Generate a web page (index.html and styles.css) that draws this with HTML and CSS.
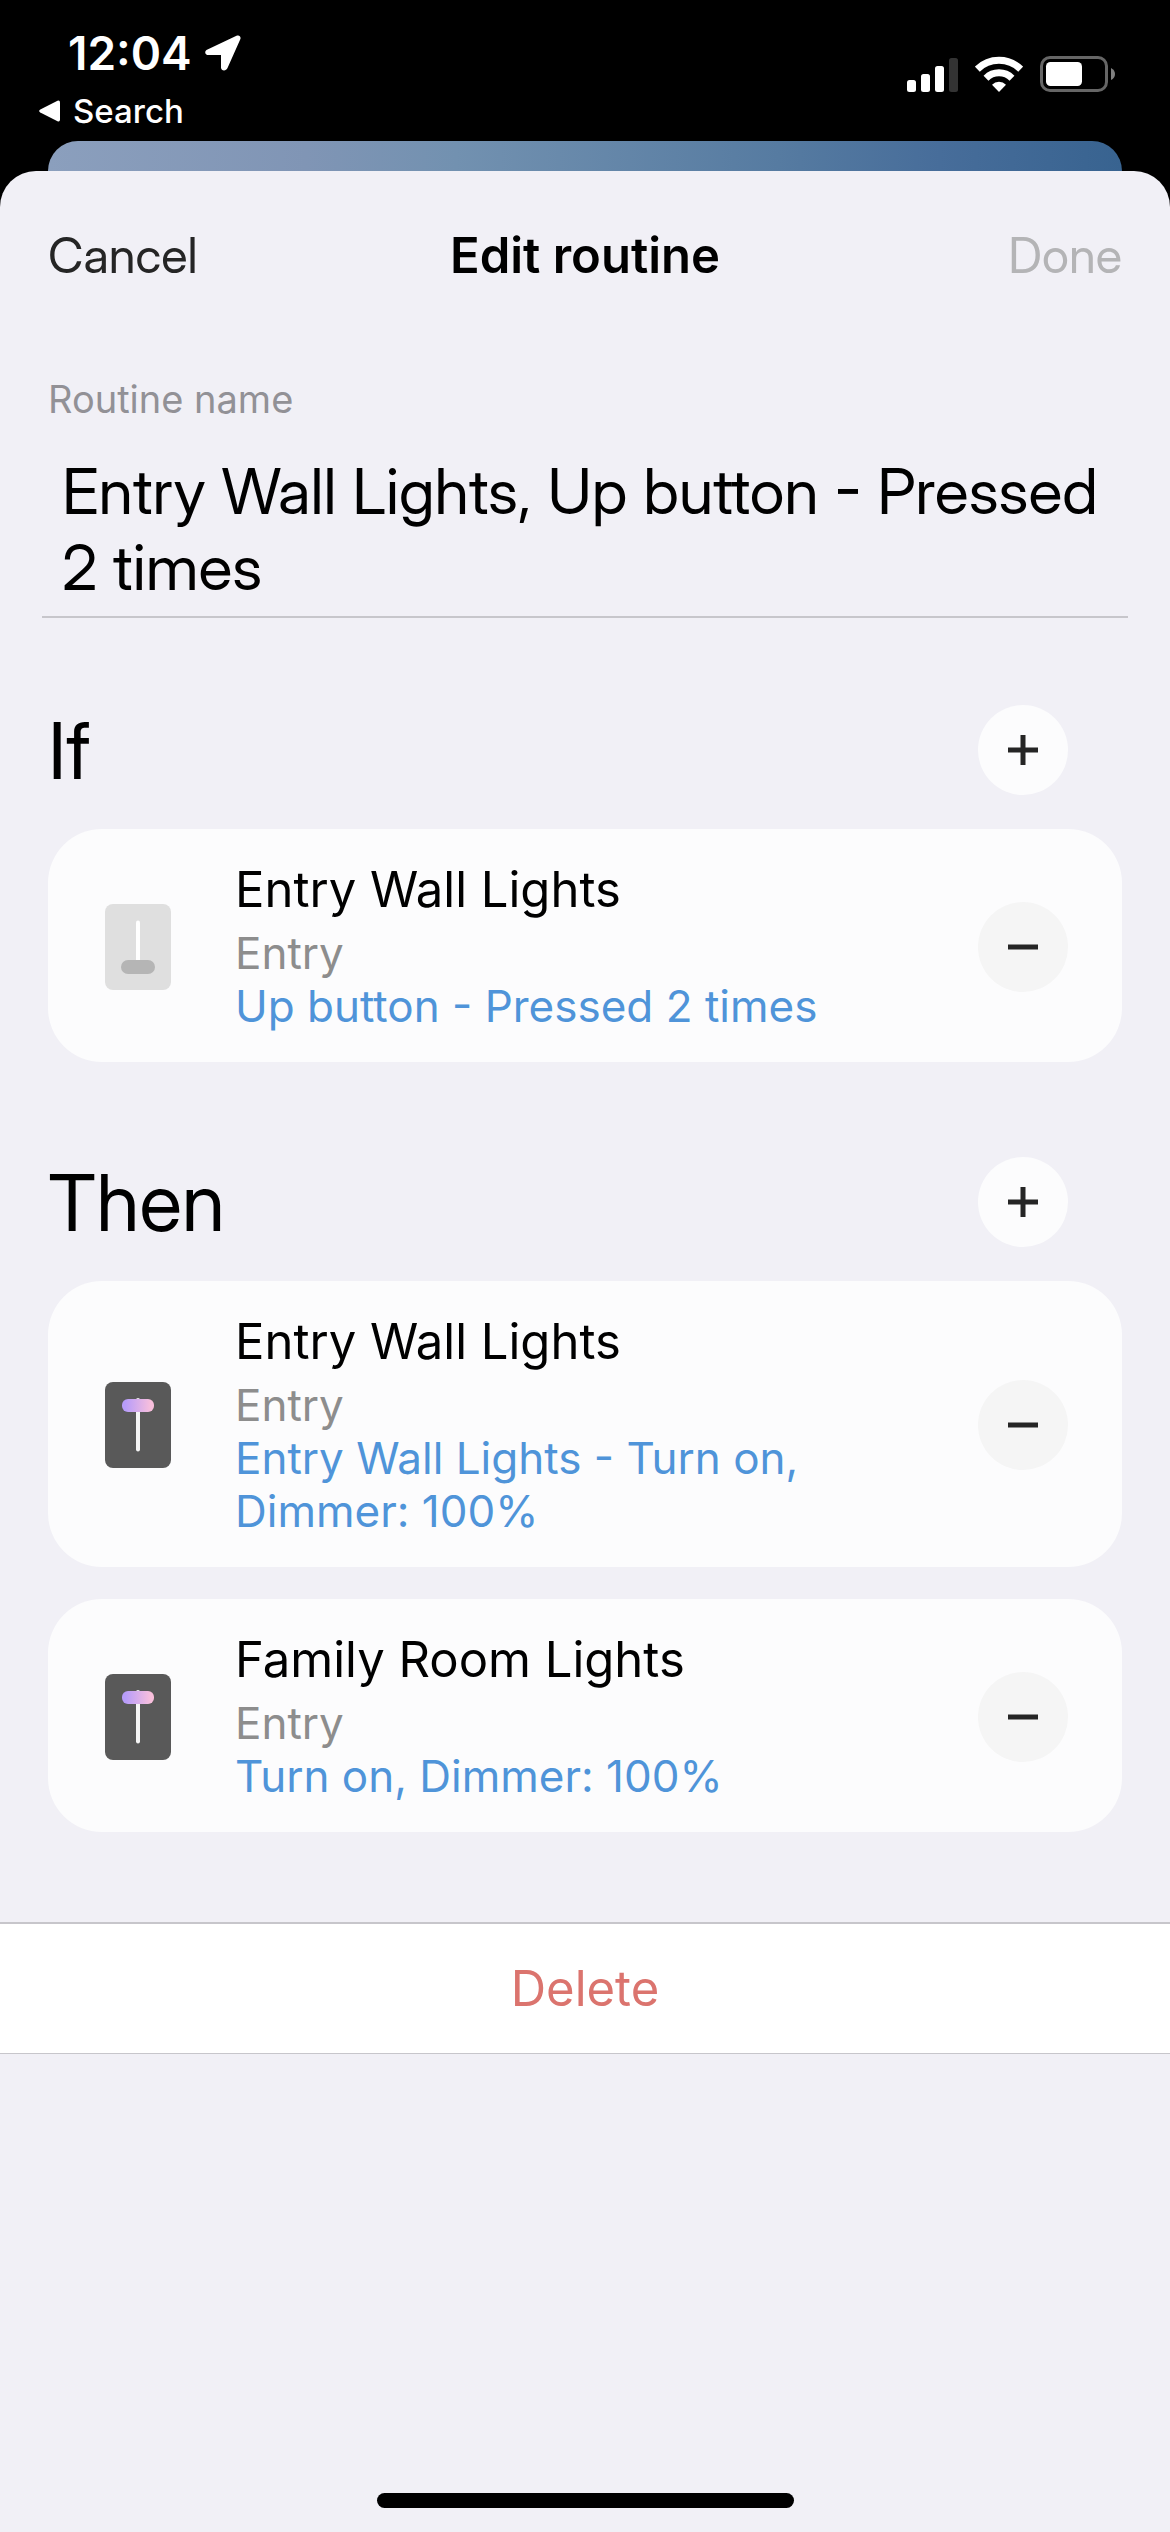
FILE: index.html
```html
<!DOCTYPE html>
<html lang="en">
<head>
<meta charset="utf-8">
<meta name="viewport" content="width=device-width">
<title>Edit routine</title>
<link rel="stylesheet" href="styles.css">
</head>
<body>
<svg class="defs" aria-hidden="true">
  <defs>
    <linearGradient id="glow" x1="0" y1="0" x2="1" y2="0">
      <stop offset="0.1" stop-color="#b79cfa"/>
      <stop offset="0.9" stop-color="#f8bfdc"/>
    </linearGradient>
    <symbol id="dimmer-on" viewBox="0 0 66 86">
      <rect width="66" height="86" rx="8" fill="#595959"/>
      <path d="M33 18V67.500" stroke="#f5f5f5" stroke-width="4" stroke-linecap="round"/>
      <rect x="17" y="17" width="32" height="13" rx="6" fill="url(#glow)"/>
    </symbol>
    <symbol id="dimmer-off" viewBox="0 0 66 86">
      <rect width="66" height="86" rx="8" fill="#dfdfdf"/>
      <path d="M33 18.500V60" stroke="#fff" stroke-width="4" stroke-linecap="round"/>
      <rect x="16" y="56" width="34" height="14" rx="7" fill="#b5b5b5"/>
    </symbol>
    <symbol id="plus" viewBox="0 0 30 30">
      <path d="M0 15H30M15 0V30" stroke="#252525" stroke-width="5"/>
    </symbol>
    <symbol id="minus" viewBox="0 0 30 30">
      <path d="M0 15H30" stroke="#252525" stroke-width="5"/>
    </symbol>
  </defs>
</svg>

<header class="status">
  <div class="status-left">
    <div class="clock">
      <span>12:04</span>
      <svg width="36" height="36" viewBox="0 0 36 36" aria-hidden="true"><path d="M2.500 14.500 31.500 .700C34.200-.400 36.300 1.500 35.300 4.200L22.500 33C21 36.700 16 36 16 32.500V20H3.500C-.300 20-1 16 2.500 14.500Z" fill="#fff"/></svg>
    </div>
    <a class="back" href="#">
      <svg width="22" height="22" viewBox="0 0 22 22" aria-hidden="true"><path d="M1.300 9.500 18.500 .800Q21 0 21 2.500V19.500Q21 22 18.500 21.200L1.300 12.500Q-1 11 1.300 9.500Z" fill="#fff"/></svg>
      <span>Search</span>
    </a>
  </div>
  <div class="status-right">
    <svg width="51" height="36" viewBox="0 0 51 36" aria-hidden="true">
      <g fill="#fff"><rect y="24" width="9" height="12" rx="2.500"/><rect x="14" y="18" width="9" height="18" rx="2.500"/><rect x="28" y="10" width="9" height="26" rx="2.500"/></g>
      <rect x="42" y="2" width="9" height="34" rx="2.500" fill="#333"/>
    </svg>
    <svg width="48" height="36" viewBox="0 0 48 36" aria-hidden="true">
      <g fill="none" stroke="#fff" stroke-width="7"><path d="M2.300 13.200A31 31 0 0 1 45.700 13.200"/><path d="M11 22.200A18.500 18.500 0 0 1 37 22.200"/></g>
      <path d="M17 28.700A10 10 0 0 1 31 28.700L24 36Z" fill="#fff"/>
    </svg>
    <svg width="75" height="36" viewBox="0 0 75 36" aria-hidden="true">
      <rect x="1.500" y="1.500" width="65" height="33" rx="8.500" fill="none" stroke="#666" stroke-width="3"/>
      <rect x="6" y="6" width="36" height="24" rx="4.500" fill="#fff"/>
      <path d="M71 12Q75 14 75 18T71 24Z" fill="#808080"/>
    </svg>
  </div>
</header>

<div class="sheet-behind"></div>

<main class="sheet">
  <nav class="bar">
    <button class="bar-button" type="button">Cancel</button>
    <h1 class="bar-title">Edit routine</h1>
    <button class="bar-button bar-done" type="button" disabled>Done</button>
  </nav>

  <div class="field">
    <label class="field-label" for="routine-name">Routine name</label>
    <textarea class="field-input" id="routine-name" rows="2" spellcheck="false">Entry Wall Lights, Up button - Pressed 2 times</textarea>
  </div>

  <section class="group">
    <header class="group-head">
      <h2 class="group-title">If</h2>
      <button class="round" type="button" aria-label="Add condition"><svg width="30" height="30"><use href="#plus"/></svg></button>
    </header>
    <article class="card">
      <svg class="device" width="66" height="86" aria-hidden="true"><use href="#dimmer-off"/></svg>
      <div class="card-text">
        <h3 class="card-title">Entry Wall Lights</h3>
        <p class="card-room">Entry</p>
        <p class="card-action">Up button - Pressed 2 times</p>
      </div>
      <button class="round round-remove" type="button" aria-label="Remove Entry Wall Lights"><svg width="30" height="30"><use href="#minus"/></svg></button>
    </article>
  </section>

  <section class="group">
    <header class="group-head">
      <h2 class="group-title">Then</h2>
      <button class="round" type="button" aria-label="Add action"><svg width="30" height="30"><use href="#plus"/></svg></button>
    </header>
    <article class="card">
      <svg class="device" width="66" height="86" aria-hidden="true"><use href="#dimmer-on"/></svg>
      <div class="card-text">
        <h3 class="card-title">Entry Wall Lights</h3>
        <p class="card-room">Entry</p>
        <p class="card-action">Entry Wall Lights - Turn on, Dimmer: 100%</p>
      </div>
      <button class="round round-remove" type="button" aria-label="Remove Entry Wall Lights"><svg width="30" height="30"><use href="#minus"/></svg></button>
    </article>
    <article class="card">
      <svg class="device" width="66" height="86" aria-hidden="true"><use href="#dimmer-on"/></svg>
      <div class="card-text">
        <h3 class="card-title">Family Room Lights</h3>
        <p class="card-room">Entry</p>
        <p class="card-action">Turn on, Dimmer: 100%</p>
      </div>
      <button class="round round-remove" type="button" aria-label="Remove Family Room Lights"><svg width="30" height="30"><use href="#minus"/></svg></button>
    </article>
  </section>

  <button class="delete" type="button">Delete</button>
  <div class="home-indicator"></div>
</main>
</body>
</html>
```

FILE: styles.css
```css
* {
  box-sizing: border-box;
}

body {
  margin: 0;
  min-height: 100vh;
  display: flex;
  flex-direction: column;
  background: #000;
  color: #000;
  font-family: Inter, "Liberation Sans", sans-serif;
  font-size: 49px;
  line-height: 60px;
}

h1, h2, h3, p {
  margin: 0;
  font-size: inherit;
  font-weight: 400;
}

button, textarea {
  margin: 0;
  padding: 0;
  border: 0;
  border-radius: 0;
  background: none;
  color: inherit;
  font: inherit;
}

svg {
  display: block;
  flex: none;
}

.defs {
  position: absolute;
  width: 0;
  height: 0;
}

/* Status bar */
.status {
  display: flex;
  justify-content: space-between;
  height: 141px;
  padding: 0 55px 0 39px;
  color: #fff;
}

.status-left {
  padding-top: 23px;
}

.clock {
  display: flex;
  align-items: center;
  gap: 13px;
  padding-left: 29px;
  font-size: 46px;
  font-weight: 600;
}

.back {
  display: flex;
  align-items: center;
  gap: 12px;
  margin-top: 8px;
  color: inherit;
  font-size: 33px;
  font-weight: 500;
  line-height: 40px;
  text-decoration: none;
}

.status-right {
  display: flex;
  gap: 17px;
  padding-top: 56px;
}

/* Sheets */
.sheet-behind {
  height: 30px;
  margin: 0 48px;
  border-radius: 30px 30px 0 0;
  background: linear-gradient(90deg, #8b9fbd, #8095b5 24%, #7291b0 38%, #567ba1 68%, #476d9a 83%, #386390);
}

.sheet {
  flex: 1;
  display: flex;
  flex-direction: column;
  border-radius: 36px 36px 0 0;
  background: #f1f0f6;
}

.bar {
  display: grid;
  grid-template-columns: 1fr auto 1fr;
  padding: 55px 48px 0;
}

.bar-button {
  justify-self: start;
  color: #252525;
  font-family: "Inter Display", Inter, "Liberation Sans", sans-serif;
}

.bar-done {
  justify-self: end;
  color: #b4b4b6;
}

.bar-title {
  font-weight: 600;
}

/* Routine name */
.field {
  display: flex;
  flex-direction: column;
  gap: 30px;
  padding: 89px 42px 0;
}

.field-label {
  padding-left: 6px;
  color: #929196;
  font-size: 38px;
  line-height: 48px;
}

.field-input {
  width: 100%;
  padding: 0 20px 11px;
  border-bottom: 2px solid #c7c6cb;
  font-family: "Inter Display", Inter, "Liberation Sans", sans-serif;
  font-size: 63px;
  line-height: 76px;
  overflow: hidden;
  resize: none;
}

/* Conditions and actions */
.group {
  display: flex;
  flex-direction: column;
  gap: 32px;
  padding: 87px 48px 0;
}

.group + .group {
  padding-top: 95px;
}

.group-head {
  display: flex;
  align-items: center;
  justify-content: space-between;
  margin-bottom: 2px;
  padding-right: 54px;
}

.group-title {
  font-family: "Inter Display", Inter, "Liberation Sans", sans-serif;
  font-size: 79px;
  line-height: 90px;
}

.round {
  flex: none;
  display: grid;
  place-items: center;
  width: 90px;
  height: 90px;
  border-radius: 50%;
  background: #fcfcfd;
}

.round-remove {
  background: #f5f5f5;
}

.card {
  display: flex;
  align-items: center;
  gap: 64px;
  padding: 31px 54px 29px 57px;
  border-radius: 54px;
  background: #fcfcfd;
}

.card-text {
  flex: 1;
  font-size: 44px;
  line-height: 53px;
}

.card-title {
  margin-bottom: 7px;
  font-size: 49px;
  line-height: 60px;
}

.card-room {
  color: #8d8d8d;
}

.card-action {
  color: #4f94d9;
}

.delete {
  width: 100%;
  height: 132px;
  margin-top: 90px;
  border-top: 2px solid #c7c6cb;
  border-bottom: 1px solid #c7c6cb;
  background: #fff;
  color: #db746e;
}

.home-indicator {
  width: 417px;
  height: 15px;
  margin: auto auto 24px;
  border-radius: 8px;
  background: #000;
}
```
